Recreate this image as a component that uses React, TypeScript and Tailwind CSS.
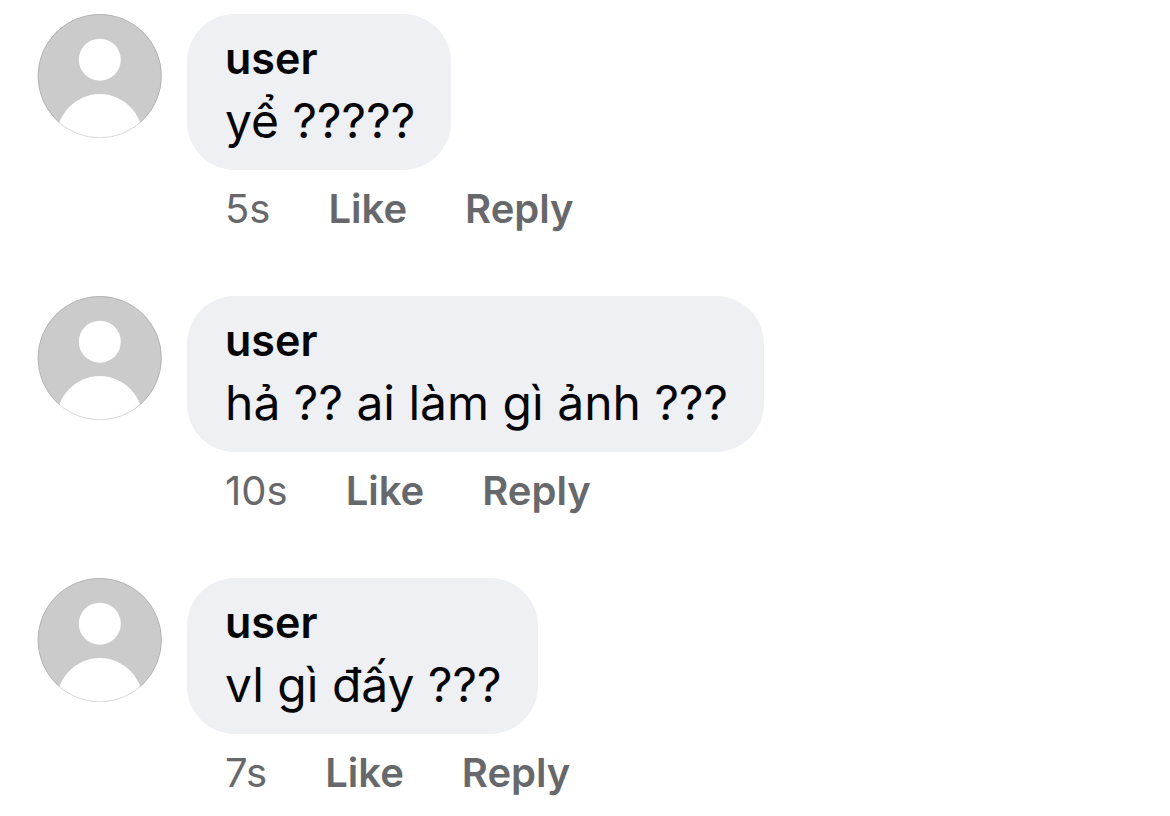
type CommentProps = {
  name: string;
  text: string;
  time: string;
};

const comments: CommentProps[] = [
  { name: "user", text: "yể ?????", time: "5s" },
  { name: "user", text: "hả ?? ai làm gì ảnh ???", time: "10s" },
  { name: "user", text: "vl gì đấy ???", time: "7s" },
];

function Avatar() {
  return (
    <svg viewBox="0 0 125 125" className="h-[125px] w-[125px] shrink-0" aria-hidden="true">
      <clipPath id="avatar-clip">
        <circle cx="62.7" cy="62" r="62" />
      </clipPath>
      <g clipPath="url(#avatar-clip)">
        <rect width="125" height="125" fill="#cbcbcb" />
        <circle cx="62.8" cy="45.7" r="21" fill="#fff" />
        <ellipse cx="62.8" cy="125" rx="43.5" ry="45" fill="#fff" />
      </g>
      <circle cx="62.7" cy="62" r="61.7" fill="none" stroke="#000" strokeOpacity="0.12" />
    </svg>
  );
}

function Comment({ name, text, time }: CommentProps) {
  return (
    <li className="flex items-start gap-[25px]">
      <Avatar />
      <div className="flex flex-col items-start">
        {/* bubble */}
        <div className="rounded-[48px] bg-[#eff0f4] pt-[18px] pr-9 pb-3 pl-[38px] text-[#050507]">
          <p className="text-[43px] leading-[52px] font-semibold">{name}</p>
          <p className="text-[48px] leading-[74px]">{text}</p>
        </div>
        {/* actions */}
        <div className="mt-[13px] flex gap-[58px] pl-[38px] text-[40px] leading-[52px] text-[#67686b]">
          <span>{time}</span>
          <button type="button" className="cursor-pointer font-semibold">
            Like
          </button>
          <button type="button" className="cursor-pointer font-semibold">
            Reply
          </button>
        </div>
      </div>
    </li>
  );
}

export default function App() {
  return (
    <main className="bg-white font-['Inter',sans-serif]">
      <ul className="flex flex-col gap-[61px] px-[37px] pt-[14px]">
        {comments.map((comment) => (
          <Comment key={comment.time} {...comment} />
        ))}
      </ul>
    </main>
  );
}
